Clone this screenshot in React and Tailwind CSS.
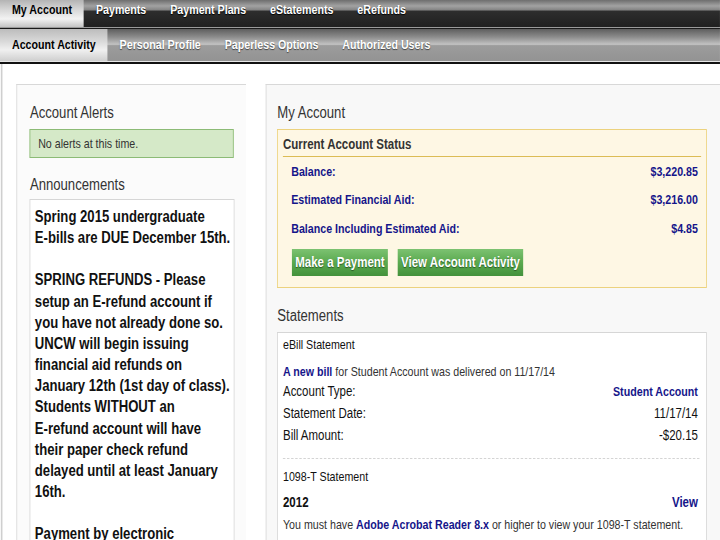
import React from "react";

const navy = "text-[#15158a]";

function TopTab({ label, active }) {
  return (
    <div
      className={
        "h-full px-[14.6px] text-[13px] font-bold leading-[20px] whitespace-nowrap " +
        (active
          ? "text-black bg-[linear-gradient(to_bottom,#b4b4b4_0%,#d6d6d6_35%,#f3f3f3_70%,#c4c4c4_100%)]"
          : "text-white [text-shadow:0_1px_1px_#000]")
      }
    >
      {label}
    </div>
  );
}

function SubTab({ label, active }) {
  return (
    <div
      className={
        "h-full px-[14.6px] text-[13px] font-bold leading-[32px] whitespace-nowrap " +
        (active
          ? "text-black bg-[linear-gradient(to_bottom,#bcbcbc_0%,#dadada_40%,#f0f0f0_65%,#cfcfcf_100%)]"
          : "text-white [text-shadow:0_1px_1px_#444]")
      }
    >
      {label}
    </div>
  );
}

function Row({ label, value }) {
  return (
    <div className="h-[28.5px] flex items-center justify-between pl-[10px] pr-[4px] text-[13px] font-bold text-[#15158a]">
      <span>{label}</span>
      <span>{value}</span>
    </div>
  );
}

export default function App() {
  const ann = [
    "Spring 2015 undergraduate",
    "E-bills are DUE December 15th.",
    "\u00a0",
    "SPRING REFUNDS - Please",
    "setup an E-refund account if",
    "you have not already done so.",
    "UNCW will begin issuing",
    "financial aid refunds on",
    "January 12th (1st day of class).",
    "Students WITHOUT an",
    "E-refund account will have",
    "their paper check refund",
    "delayed until at least January",
    "16th.",
    "\u00a0",
    "Payment by electronic",
  ];
  return (
    <div className="w-[720px] h-[540px] overflow-hidden bg-white">
      <div className="w-[878px] h-[540px] origin-top-left scale-x-[0.82] [font-family:'Liberation_Sans',Arial,sans-serif] flex flex-col">
        {/* top nav */}
        <div className="h-[27px] flex bg-[linear-gradient(to_bottom,#6e6e6e_0%,#a2a2a2_22%,#858585_36%,#2d2d2d_42%,#202020_100%)]">
          <TopTab label="My Account" active />
          <TopTab label="Payments" />
          <TopTab label="Payment Plans" />
          <TopTab label="eStatements" />
          <TopTab label="eRefunds" />
        </div>
        <div className="h-[1px] bg-[#9a9a9a]" />
        <div className="h-[1px] bg-[#1a1a1a]" />
        <div className="h-[32px] flex bg-[linear-gradient(to_bottom,#5e5e5e_0%,#8c8c8c_25%,#c2c2c2_48%,#9c9c9c_52%,#939393_100%)]">
          <SubTab label="Account Activity" active />
          <SubTab label="Personal Profile" />
          <SubTab label="Paperless Options" />
          <SubTab label="Authorized Users" />
        </div>
        <div className="h-[1px] bg-[#e6e6e6]" />
        <div className="h-[2px] bg-[#111]" />

        {/* content */}
        <div className="flex-1 min-h-0 ml-[1px] border-l-[2px] border-[#cfcfcf] flex items-start pt-[20px] pl-[16.5px] gap-[24px]">
          {/* left panel */}
          <div className="w-[280px] h-[480px] shrink-0 border-t border-l border-[#d8d8d8] bg-[#fbfbfb] pl-[15px] pt-[18px]">
            <div className="ml-[1px] text-[16px] leading-[20px] text-[#333]">Account Alerts</div>
            <div className="mt-[6px] w-[249px] h-[29px] border border-[#8cbb76] bg-[#d5e9c8] pl-[10px] text-[13px] leading-[27px] text-[#333]">
              No alerts at this time.
            </div>
            <div className="mt-[17px] ml-[1px] text-[16px] leading-[20px] text-[#333]">Announcements</div>
            <div className="mt-[4px] w-[250px] h-[400px] border border-[#d6d6d6] bg-white pl-[6px] pt-[6px] overflow-hidden">
              {ann.map((l, i) => (
                <div key={i} className="text-[16px] font-bold leading-[21.15px] text-[#111] whitespace-nowrap">
                  {l}
                </div>
              ))}
            </div>
          </div>

          {/* right panel */}
          <div className="flex-1 h-[480px] border-t border-l border-[#d8d8d8] bg-[#f8f8f8] pl-[13.6px] pt-[18px]">
            <div className="text-[16px] leading-[20px] text-[#333]">My Account</div>
            <div className="mt-[6px] w-[524px] border border-[#ecd27e] bg-[#fef7e4] px-[6px] pt-[5px] pb-[11px]">
              <div className="pr-[4px] pb-[3px] border-b border-[#dcbc55] text-[14px] font-bold leading-[18px] text-[#333]">
                Current Account Status
              </div>
              <Row label="Balance:" value="$3,220.85" />
              <Row label="Estimated Financial Aid:" value="$3,216.00" />
              <Row label="Balance Including Estimated Aid:" value="$4.85" />
              <div className="mt-[6.5px] ml-[11px] flex gap-[12px]">
                <div className="h-[27px] px-[4px] flex items-center text-[14px] font-bold text-white [text-shadow:0_1px_1px_#2a5a25] bg-[linear-gradient(to_bottom,#7cc271_0%,#5aa94f_50%,#44923c_100%)]">
                  Make a Payment
                </div>
                <div className="h-[27px] px-[4px] flex items-center text-[14px] font-bold text-white [text-shadow:0_1px_1px_#2a5a25] bg-[linear-gradient(to_bottom,#7cc271_0%,#5aa94f_50%,#44923c_100%)]">
                  View Account Activity
                </div>
              </div>
            </div>

            <div className="mt-[18px] text-[16px] leading-[20px] text-[#333]">Statements</div>
            <div className="mt-[6px] w-[524px] h-[220px] border border-[#d6d6d6] bg-white px-[6px] pt-[3px]">
              <div className="text-[13px] leading-[18px] text-[#111]">eBill Statement</div>
              <div className="mt-[9px] text-[13px] leading-[18px] text-[#333] whitespace-nowrap">
                <span className={"font-bold " + navy}>A new bill</span> for Student Account was delivered on 11/17/14
              </div>
              <div className="h-[21px] flex items-center justify-between pr-[4px] text-[14px] text-[#111]">
                <span>Account Type:</span>
                <span className={"font-bold text-[13px] " + navy}>Student Account</span>
              </div>
              <div className="h-[22px] flex items-center justify-between pr-[4px] text-[14px] text-[#111]">
                <span>Statement Date:</span>
                <span>11/17/14</span>
              </div>
              <div className="h-[23px] flex items-center justify-between pr-[4px] text-[14px] text-[#111]">
                <span>Bill Amount:</span>
                <span>-$20.15</span>
              </div>
              <div className="mt-[11px] mr-[2px] border-t border-dashed border-[#cfcfcf]" />
              <div className="mt-[9px] text-[13px] leading-[18px] text-[#111]">1098-T Statement</div>
              <div className="mt-[6px] h-[20px] flex items-center justify-between pr-[4px] text-[14px] font-bold text-[#111]">
                <span>2012</span>
                <span className={navy}>View</span>
              </div>
              <div className="mt-[4px] text-[13px] leading-[18px] text-[#333] whitespace-nowrap">
                You must have <span className={"font-bold " + navy}>Adobe Acrobat Reader 8.x</span> or higher to view your 1098-T statement.
              </div>
            </div>
          </div>
        </div>
      </div>
    </div>
  );
}
